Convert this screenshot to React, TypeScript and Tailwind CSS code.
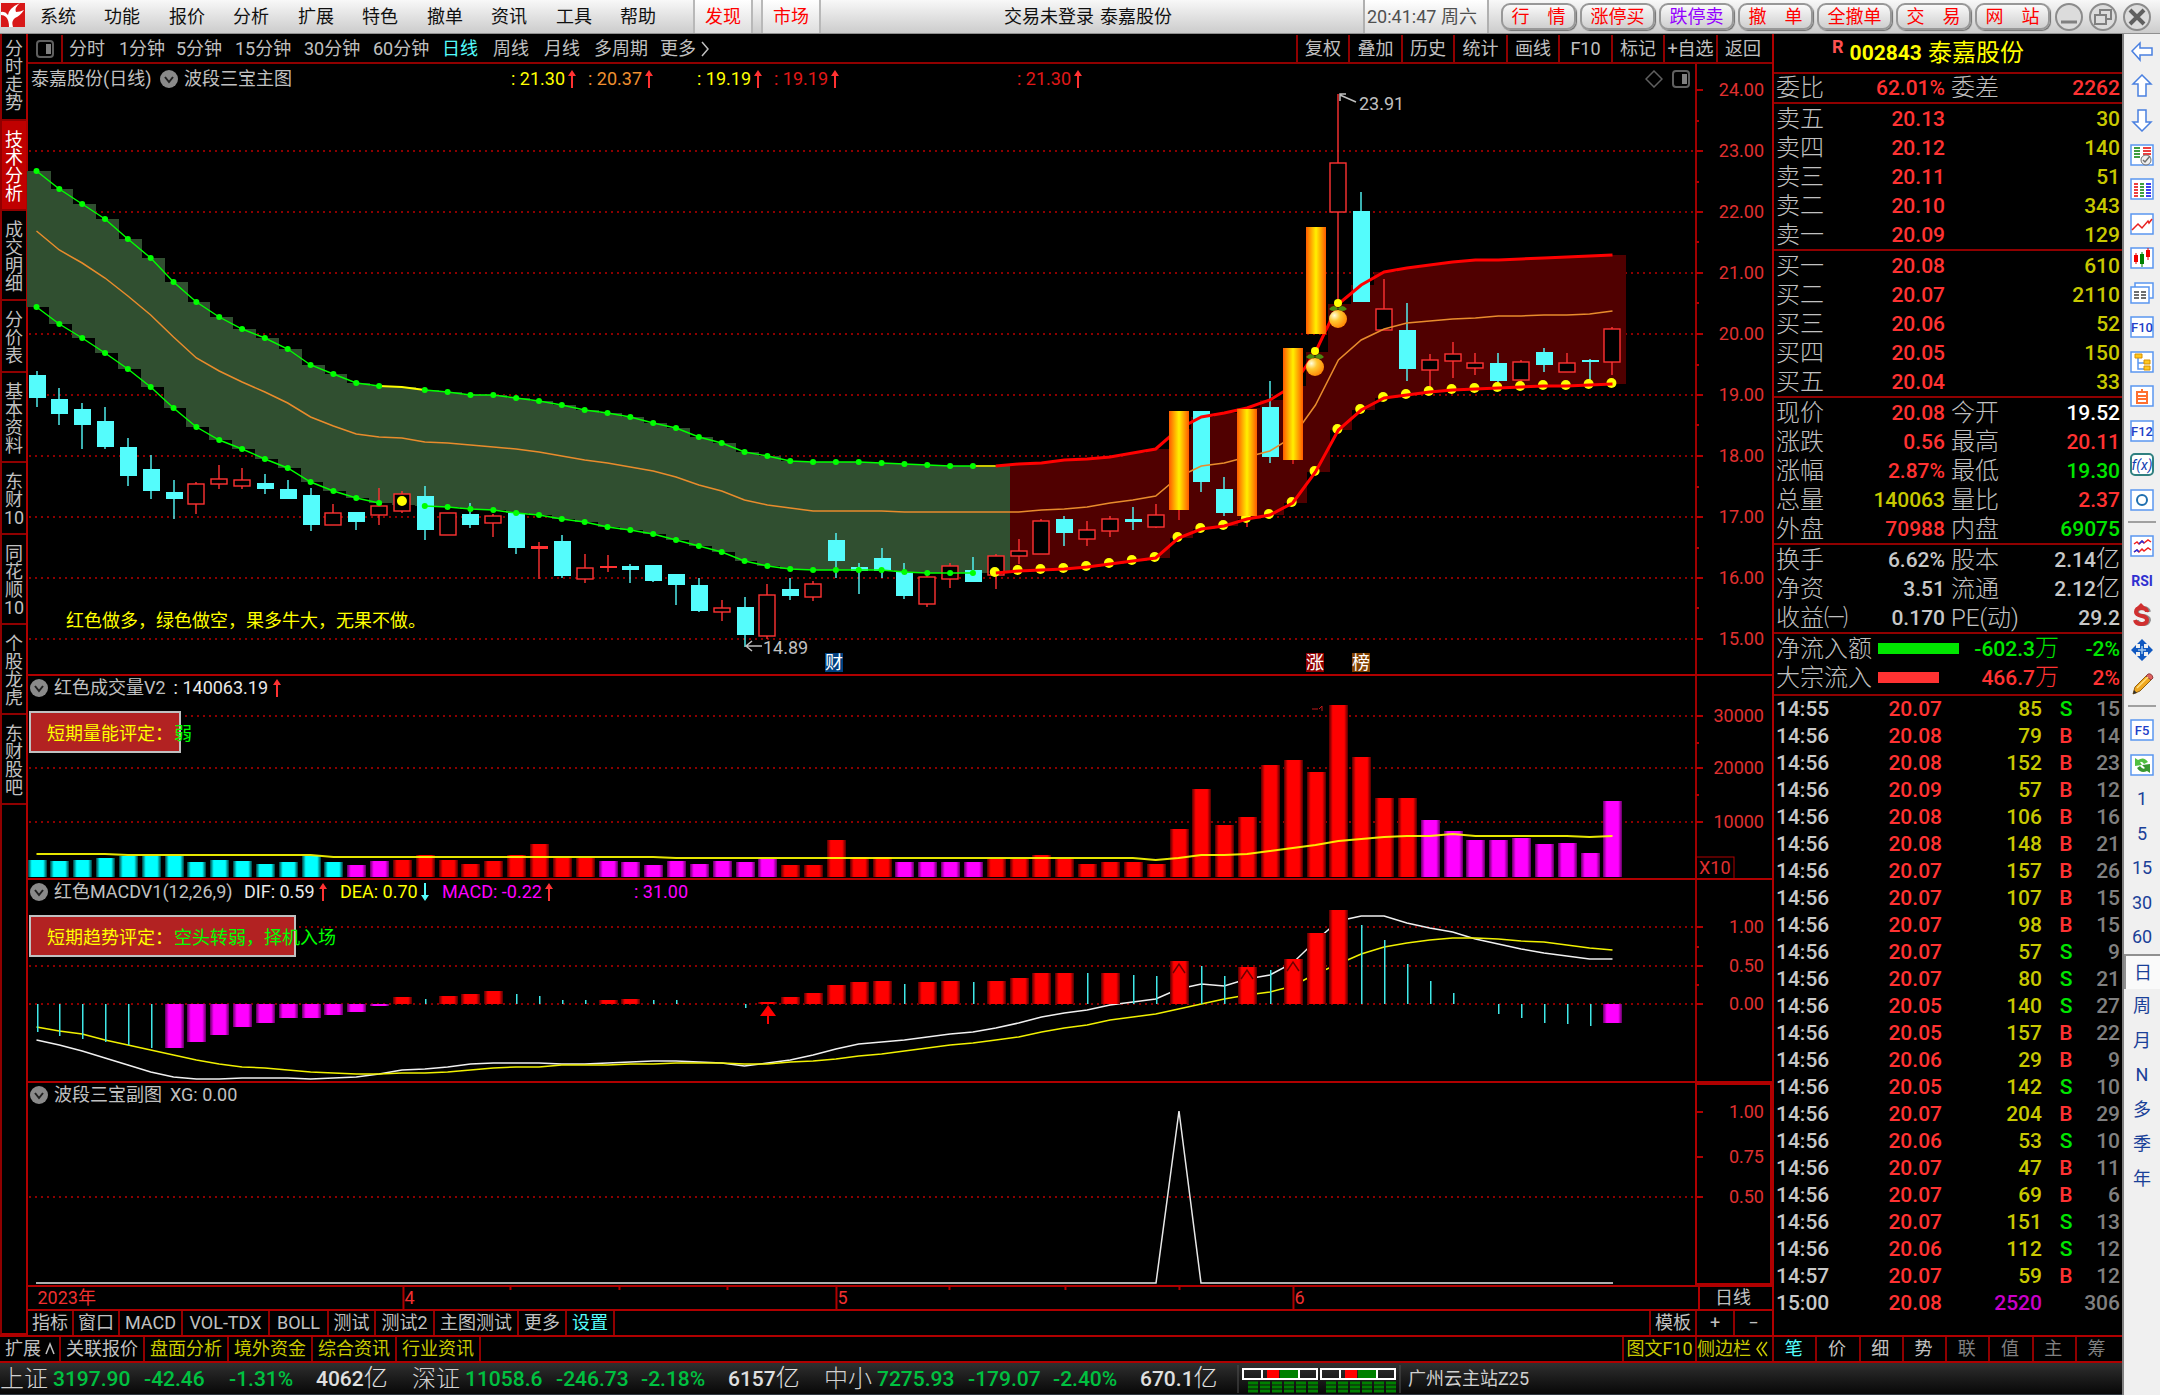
import React from "react";

type Kind = "down" | "up" | "flat" | "gold";
type Candle = [Kind, number, number, number, number];

const BAR_X0 = 36.5;
const BAR_STEP = 22.84;
const barX = (i: number) => BAR_X0 + BAR_STEP * i;

/* kind, wick top, body top, body bottom, wick bottom */
const candles: Candle[] = [
  ["down", 371, 375, 398, 407], ["down", 388, 399, 414, 425], ["down", 403, 409, 425, 449], ["down", 407, 421, 447, 449],
  ["down", 438, 447, 476, 486], ["down", 455, 469, 491, 499], ["down", 480, 492, 499, 519], ["up", 482, 484, 504, 514],
  ["up", 465, 479, 484, 489], ["up", 468, 480, 486, 489], ["down", 474, 483, 489, 494], ["down", 480, 489, 499, 499],
  ["down", 488, 495, 525, 531], ["up", 504, 513, 525, 525], ["down", 512, 512, 522, 530], ["up", 488, 506, 515, 525],
  ["up", 491, 494, 511, 513], ["down", 486, 496, 530, 540], ["up", 513, 513, 535, 535], ["down", 503, 514, 525, 528],
  ["up", 514, 516, 523, 537], ["down", 513, 513, 548, 554], ["flat", 542, 546, 549, 579], ["down", 535, 541, 576, 578],
  ["up", 554, 568, 579, 583], ["flat", 555, 566, 568, 572], ["down", 564, 566, 570, 583], ["down", 565, 565, 581, 582],
  ["down", 574, 574, 585, 605], ["down", 578, 585, 611, 612], ["up", 600, 608, 612, 621], ["down", 597, 607, 635, 647],
  ["up", 584, 595, 636, 639], ["down", 578, 589, 596, 600], ["up", 581, 584, 597, 601], ["down", 533, 540, 561, 578],
  ["down", 563, 567, 571, 594], ["down", 548, 558, 571, 578], ["down", 563, 572, 596, 599], ["up", 575, 577, 604, 607],
  ["up", 563, 566, 579, 588], ["down", 557, 570, 582, 582], ["up", 554, 556, 575, 589], ["up", 539, 551, 556, 564],
  ["up", 519, 521, 554, 554], ["down", 516, 519, 533, 546], ["up", 521, 530, 539, 546], ["up", 516, 519, 531, 537],
  ["down", 507, 519, 522, 530], ["up", 504, 515, 527, 528], ["gold", 411, 411, 510, 520], ["down", 411, 411, 482, 492],
  ["down", 477, 489, 513, 516], ["gold", 409, 409, 516, 527], ["down", 381, 407, 457, 463], ["gold", 348, 348, 460, 464],
  ["gold", 227, 227, 334, 334], ["up", 94, 163, 212, 300], ["down", 192, 211, 302, 302], ["up", 279, 309, 330, 330],
  ["down", 303, 330, 369, 381], ["up", 354, 360, 370, 387], ["up", 342, 354, 361, 378], ["up", 353, 363, 368, 375],
  ["down", 353, 363, 381, 383], ["up", 360, 362, 380, 382], ["down", 348, 352, 365, 372], ["up", 353, 363, 372, 372],
  ["down", 359, 360, 362, 380], ["up", 327, 329, 362, 375],
];

const upper = [
  171, 189, 204, 219, 239, 258, 282, 302, 317, 329, 338, 349, 365, 374, 383, 386, 387, 390, 392, 395, 395, 398, 401, 405,
  410, 413, 417, 423, 428, 437, 443, 452, 456, 461, 462, 462, 462, 463, 464, 465, 466, 466, 466, 464, 463, 460, 459, 457,
  453, 449, 429, 417, 413, 408, 400, 386, 352, 304, 285, 272, 268, 265, 262, 260, 260, 259, 258, 257, 256, 255,
];
const lower = [
  307, 324, 338, 353, 369, 387, 408, 427, 440, 449, 459, 468, 482, 491, 498, 503, 505, 506, 507, 509, 510, 513, 515, 519,
  522, 527, 530, 534, 540, 546, 552, 561, 566, 569, 570, 570, 570, 570, 572, 573, 573, 573, 573, 571, 570, 569, 567, 564,
  561, 558, 538, 529, 526, 519, 515, 503, 472, 430, 410, 398, 395, 392, 390, 389, 388, 387, 386, 386, 385, 384,
];
const middle = [
  231, 250, 263, 278, 296, 315, 337, 358, 371, 382, 392, 403, 417, 426, 434, 437, 438, 442, 443, 445, 447, 449, 452, 456,
  460, 463, 467, 471, 477, 485, 491, 500, 505, 508, 511, 511, 511, 511, 512, 512, 512, 512, 512, 512, 510, 509, 507, 503,
  500, 496, 477, 466, 463, 457, 451, 437, 405, 360, 340, 329, 323, 321, 319, 318, 316, 316, 315, 315, 314, 311,
];

const volumeTop = [
  859, 860, 859, 857, 855, 855, 855, 861, 859, 860, 863, 861, 855, 861, 864, 860, 859, 854, 859, 863, 860, 854, 843, 857,
  857, 860, 861, 864, 860, 863, 860, 861, 858, 864, 864, 839, 856, 856, 861, 861, 861, 861, 858, 858, 854, 858, 863, 861,
  861, 863, 828, 788, 824, 816, 764, 759, 771, 704, 756, 797, 797, 819, 830, 839, 839, 837, 843, 842, 852, 800,
];
const volumeColor = "ccccccccccccccmmrrrrrrrrrmmmmmmmmrrrrrmmmmrrrrrrrrrrrrrrrrrrrmmmmmmmmm";
const volumeMa = [
  853, 853, 853, 853, 854, 854, 854, 854, 854, 854, 854, 854, 854, 856, 856, 856, 856, 856, 856, 856, 856, 856, 856, 856,
  856, 856, 856, 856, 857, 857, 857, 857, 857, 857, 857, 857, 857, 857, 857, 857, 857, 857, 857, 857, 857, 857, 857, 857,
  857, 859, 857, 854, 854, 853, 850, 847, 844, 840, 838, 836, 835, 835, 833, 835, 835, 835, 835, 835, 836, 835,
];

const macdEnd = [
  1031, 1035, 1038, 1041, 1044, 1047, 1047, 1041, 1034, 1026, 1022, 1017, 1017, 1014, 1011, 1005, 996, 998, 995, 993, 990,
  993, 995, 999, 999, 999, 998, 999, 999, 1003, 1003, 1007, 1001, 996, 992, 984, 981, 980, 983, 981, 980, 981, 980, 977,
  972, 972, 972, 972, 974, 975, 960, 965, 975, 966, 969, 958, 932, 909, 924, 939, 963, 980, 992, 1003, 1013, 1017, 1022,
  1023, 1025, 1022,
];
const macdKind = "ttttttmmmmmmmmmmrtrrrttttrrttttt" + "rrrrrrtrrtrrrrtrttrttrtrrrttttttttttt" + "m";
const dif = [
  1039, 1044, 1050, 1057, 1064, 1071, 1076, 1078, 1078, 1077, 1077, 1077, 1078, 1077, 1076, 1073, 1069, 1068, 1066, 1063,
  1062, 1062, 1062, 1063, 1063, 1062, 1061, 1060, 1060, 1061, 1062, 1065, 1062, 1059, 1054, 1048, 1043, 1041, 1039, 1036,
  1033, 1031, 1027, 1022, 1016, 1012, 1009, 1004, 1001, 998, 988, 983, 985, 978, 974, 962, 940, 920, 915, 915, 922, 927,
  931, 938, 943, 948, 952, 955, 958, 958,
];
const dea = [
  1026, 1030, 1033, 1039, 1044, 1049, 1054, 1059, 1063, 1066, 1067, 1069, 1071, 1072, 1073, 1073, 1072, 1072, 1071, 1069,
  1067, 1066, 1066, 1064, 1064, 1064, 1063, 1063, 1062, 1062, 1062, 1063, 1063, 1061, 1060, 1058, 1055, 1053, 1050, 1047,
  1044, 1042, 1039, 1036, 1031, 1027, 1024, 1019, 1016, 1013, 1008, 1003, 998, 994, 991, 985, 973, 963, 953, 946, 942,
  939, 937, 937, 938, 940, 941, 944, 947, 949,
];

const points = (values: number[], from = 0, to = values.length - 1) =>
  values
    .slice(from, to + 1)
    .map((v, k) => `${barX(from + k).toFixed(1)},${v}`)
    .join(" ");

function GridLines({ ys }: { ys: number[] }) {
  return (
    <g stroke="#8c0000" strokeWidth="2" strokeDasharray="2 4">
      {ys.map((y) => (
        <line key={y} x1="29" x2="1695" y1={y} y2={y} />
      ))}
    </g>
  );
}

function Fruit({ x, y }: { x: number; y: number }) {
  return (
    <g>
      <circle cx={x} cy={y - 16} r="4" fill="#ffff00" />
      <path d={`M${x} ${y - 6} v-6`} stroke="#3a2a10" strokeWidth="3" />
      <path d={`M${x} ${y - 10} q-4 -6 -9 0 q4 4 9 0 q4 -6 9 0 q-4 4 -9 0`} fill="#4c8a10" />
      <circle cx={x} cy={y} r="9" fill="url(#fruit)" />
    </g>
  );
}

function Tag({ x, label, fill }: { x: number; label: string; fill: string }) {
  return (
    <g>
      <rect x={x} y="653" width="18" height="19" fill={fill} />
      <text x={x} y="669" fontSize="18" fill="#ffffff">{label}</text>
    </g>
  );
}

function PriceChart() {
  return (
    <svg viewBox="28 94 1667 580" className="block w-full grow overflow-visible" role="img" aria-label="日线">
      <defs>
        <linearGradient id="gold" x1="0" x2="1" y1="0" y2="0">
          <stop offset="0" stopColor="#ff5a00" />
          <stop offset="0.5" stopColor="#fff000" />
          <stop offset="1" stopColor="#ff5a00" />
        </linearGradient>
        <radialGradient id="fruit" cx="0.3" cy="0.3" r="0.8">
          <stop offset="0" stopColor="#ffffe0" />
          <stop offset="0.4" stopColor="#ffc830" />
          <stop offset="1" stopColor="#ff8000" />
        </radialGradient>
      </defs>
      <GridLines ys={[151, 212, 273, 334, 395, 456, 517, 578, 639]} />
      {upper.map((top, i) => (
        <rect
          key={i}
          x={Math.round(barX(i) - 10)}
          y={top}
          width={24}
          height={lower[i] - top}
          fill={i <= 42 ? "#304f30" : "#500000"}
          shapeRendering="crispEdges"
        />
      )).reverse()}
      {candles.map(([kind, high, top, bottom, low], i) => {
        const x = Math.round(barX(i));
        if (kind === "gold") {
          return <line key={i} x1={x} x2={x} y1={bottom} y2={low} stroke="#c01818" strokeWidth="2" />;
        }
        const color = kind === "down" ? "#54fcfc" : "#ff3232";
        return (
          <g key={i} strokeWidth="1.4">
            <line x1={x} x2={x} y1={high} y2={top} stroke={color} />
            <line x1={x} x2={x} y1={bottom} y2={low} stroke={color} />
            {kind === "up" ? (
              <rect x={x - 8} y={top} width="16" height={bottom - top} fill="#000000" stroke={color} />
            ) : (
              <rect x={x - 8} y={top} width="17" height={Math.max(2, bottom - top)} fill={color} />
            )}
          </g>
        );
      })}
      <circle cx={barX(16)} cy="501" r="5" fill="#ffff00" />
      <polyline points={points(middle)} fill="none" stroke="#e88c2c" strokeWidth="1.5" />
      <g fill="none" stroke="#00ff00" strokeWidth="1.4">
        <polyline points={points(upper, 0, 15)} />
        <polyline points={points(upper, 15, 17)} stroke="#ffff00" strokeWidth="2" />
        <polyline points={points(upper, 17, 41)} />
        <polyline points={points(upper, 41, 42)} stroke="#c8c800" strokeWidth="2" />
        <polyline points={points(lower, 0, 15)} />
        <polyline points={points(lower, 17, 41)} />
      </g>
      {upper.slice(0, 42).map((y, i) =>
        i === 16 ? null : (
          <g key={i} fill="#00ff00">
            <circle cx={barX(i)} cy={y} r="3" />
            <circle cx={barX(i)} cy={lower[i]} r="3" />
          </g>
        ),
      )}
      {lower.slice(42).map((y, k) => (
        <circle key={k} cx={barX(42 + k) - 1} cy={y - 1} r="5" fill="#ffff00" />
      ))}
      <polyline points={points(upper, 42)} fill="none" stroke="#ff0000" strokeWidth="3" />
      <polyline points={points(lower, 42)} fill="none" stroke="#ff0000" strokeWidth="3" />
      {candles.map(([kind, , top, bottom], i) =>
        kind === "gold" ? (
          <rect key={i} x={Math.round(barX(i)) - 10} y={top} width="20" height={bottom - top} fill="url(#gold)" />
        ) : null,
      )}
      <Fruit x={1315} y={367} />
      <Fruit x={1338} y={319} />
      <g fill="none" stroke="#c0c0c0" strokeWidth="1.5">
        <path d="M1356 102 l-16 -7 m0 6 v-7 h6" />
        <path d="M762 646 h-16 m6 -5 l-6 5 l6 5" />
      </g>
      <g fontSize="18" fill="#c0c0c0">
        <text x="1359" y="110">23.91</text>
        <text x="763" y="654">14.89</text>
      </g>
      <text x="66" y="627" fontSize="18" fill="#ffff00">红色做多，绿色做空，果多牛大，无果不做。</text>
      <Tag x={825} label="财" fill="#004080" />
      <Tag x={1306} label="涨" fill="#900000" />
      <Tag x={1352} label="榜" fill="#804000" />
    </svg>
  );
}

function BarGradients() {
  return (
    <defs>
      {[
        ["c", "#00ffff", "#003c3c"],
        ["m", "#ff00ff", "#600060"],
        ["r", "#ff0000", "#500000"],
      ].map(([id, mid, edge]) => (
        <linearGradient key={id} id={`bar-${id}`} x1="0" x2="1" y1="0" y2="0">
          <stop offset="0" stopColor={edge} />
          <stop offset="0.2" stopColor={mid} />
          <stop offset="0.8" stopColor={mid} />
          <stop offset="1" stopColor={edge} />
        </linearGradient>
      ))}
    </defs>
  );
}

function Verdict({ y, width, label, verdict }: { y: number; width: number; label: string; verdict: string }) {
  return (
    <g>
      <rect x="30" y={y} width={width} height="40" fill="#b22222" stroke="#c0c0c0" strokeWidth="2" />
      <text x="47" y={y + 28} fontSize="18" fill="#ffff00">{label}</text>
      <text x="174" y={y + 28} fontSize="18" fill="#00ff00">{verdict}</text>
    </g>
  );
}

function VolumeChart() {
  return (
    <svg viewBox="28 699 1667 178" className="block w-full grow" role="img" aria-label="成交量">
      <BarGradients />
      <GridLines ys={[715, 767, 821]} />
      <path d="M1312 708 h6 m4 -3 v5 m-3 -2 l3 -3" stroke="#c01818" fill="none" />
      {volumeTop.map((y, i) => (
        <rect key={i} x={Math.round(barX(i)) - 9} y={y} width="19" height={876 - y} fill={`url(#bar-${volumeColor[i]})`} />
      ))}
      <polyline points={points(volumeMa)} fill="none" stroke="#ffff00" strokeWidth="2" strokeOpacity="0.9" />
      <Verdict y={711} width={150} label="短期量能评定：" verdict="弱" />
    </svg>
  );
}

function MacdChart() {
  return (
    <svg viewBox="28 903 1667 177" className="block w-full grow" role="img" aria-label="MACD">
      <GridLines ys={[926, 965, 1003]} />
      <polyline points={points(dif)} fill="none" stroke="#f0f0f0" strokeWidth="1.5" />
      <polyline points={points(dea)} fill="none" stroke="#f0f000" strokeWidth="1.5" />
      {macdEnd.map((end, i) => {
        const kind = macdKind[i];
        const top = Math.min(1003, end);
        const height = Math.abs(end - 1003);
        const x = Math.round(barX(i));
        return kind === "t" ? (
          <rect key={i} x={x} y={top} width="1.5" height={height} fill="#40e8e8" />
        ) : (
          <rect key={i} x={x - 9} y={top} width="19" height={height} fill={`url(#bar-${kind})`} />
        );
      })}
      <path d="M768 1004 l8 11 h-7 v8 h-2 v-8 h-7 z" fill="#ff0000" />
      {[50, 53, 55].map((i) => (
        <path
          key={i}
          d={`M${Math.round(barX(i)) - 6} ${macdEnd[i] + 12} l6 -9 l6 9`}
          fill="#ff0000"
          stroke="#700000"
          strokeWidth="1.5"
        />
      ))}
      <Verdict y={915} width={265} label="短期趋势评定：" verdict="空头转弱，择机入场" />
    </svg>
  );
}

function SignalChart() {
  return (
    <svg viewBox="28 1106 1667 178" className="block w-full grow" role="img" aria-label="波段三宝副图">
      <GridLines ys={[1196]} />
      <path
        d={`M36 1282 H${barX(49).toFixed(0)} L${barX(50).toFixed(0)} 1110 L${barX(51).toFixed(0)} 1282 H1613`}
        fill="none"
        stroke="#e8e8e8"
        strokeWidth="1.5"
      />
    </svg>
  );
}

function Axis({ top, height, labels, minor, boxed = false, unit }: {
  top: number;
  height: number;
  labels: [number, string][];
  minor: number[];
  boxed?: boolean;
  unit?: string;
}) {
  return (
    <svg
      viewBox={`0 ${top} 77 ${height}`}
      className="block w-[77px] shrink-0 self-stretch"
      role="img"
      aria-label="坐标"
    >
      {boxed ? (
        <rect x="1" y={top + 1} width="75" height={height - 2} fill="none" stroke="#b00000" strokeWidth="2" />
      ) : (
        <line x1="1" x2="1" y1={top} y2={top + height} stroke="#a00000" strokeWidth="2" />
      )}
      <g stroke="#b00000" strokeWidth="2">
        {labels.map(([y]) => (
          <line key={y} x1="1" x2="8" y1={y} y2={y} />
        ))}
        {minor.map((y) => (
          <line key={y} x1="1" x2="4" y1={y} y2={y} />
        ))}
      </g>
      <g fontSize="18" fill="#e03030" textAnchor="end">
        {labels.map(([y, label]) => (
          <text key={y} x="69" y={y + 6}>{label}</text>
        ))}
      </g>
      {unit && (
        <g>
          <rect x="1" y={top + height - 21} width="38" height="22" fill="none" stroke="#b00000" />
          <text x="4" y={top + height - 4} fontSize="18" fill="#e03030">{unit}</text>
        </g>
      )}
    </svg>
  );
}

function Arrow({ down = false }: { down?: boolean }) {
  return (
    <svg viewBox="0 0 10 20" className="h-5 w-2.5 shrink-0" aria-hidden="true">
      {down ? (
        <path d="M4 1 h2 v12 h3 l-4 6 l-4 -6 h3 z" fill="#54fcfc" />
      ) : (
        <path d="M4 19 h2 v-12 h3 l-4 -6 l-4 6 h3 z" fill="#ff3232" />
      )}
    </svg>
  );
}

function Toggle() {
  return (
    <button type="button" aria-label="指标菜单" className="flex h-[18px] w-[18px] shrink-0 items-center justify-center rounded-full bg-[#8a8a8a]">
      <svg viewBox="0 0 12 12" className="h-3 w-3" aria-hidden="true">
        <path d="M2 4 l4 5 l4 -5" fill="none" stroke="#202020" strokeWidth="2" />
      </svg>
    </button>
  );
}

function LegendValue({ value, className }: { value: string; className: string }) {
  return (
    <span className={`flex w-[69px] shrink-0 items-center gap-0.5 ${className}`}>
      <span className="w-[54px] whitespace-pre">: {value}</span>
      <Arrow />
    </span>
  );
}

function PanelIcon() {
  return (
    <svg viewBox="0 0 20 20" className="h-5 w-5" aria-hidden="true">
      <rect x="2" y="2" width="16" height="16" rx="3" fill="none" stroke="#606060" strokeWidth="2" />
      <rect x="11" y="5" width="5" height="10" fill="#808080" />
    </svg>
  );
}

const menus = ["系统", "功能", "报价", "分析", "扩展", "特色", "撤单", "资讯", "工具", "帮助"];
const tradeButtons = ["行　情", "涨停买", "跌停卖", "撤　单", "全撤单", "交　易", "网　站"];

function TopBar() {
  return (
    <header className="flex h-[34px] shrink-0 items-stretch border-b border-[#909090] bg-linear-to-b from-[#f8f8f8] to-[#cccccc] text-[18px] leading-[24px] text-[#101010]">
      <svg viewBox="0 0 26 26" className="my-0.5 h-[26px] w-[26px] shrink-0" role="img" aria-label="通达信">
        <rect x="1" y="1" width="24" height="24" fill="#d81818" />
        <path d="M1 10 Q5 9 8 13 Q9 6 20 1 Q14 6 16 10 Q20 10 24 8 Q20 14 15 16 Q11 19 13 25 H9 Q9 18 6 15 Q4 13 1 13 Z" fill="#ffffff" />
      </svg>
      <nav className="flex">
        {menus.map((m, i) => (
          <button key={m} type="button" className={i % 2 ? "w-[65px] pl-3.5 text-left" : "w-[64px] pl-3.5 text-left"}>
            {m}
          </button>
        ))}
      </nav>
      <div className="ml-[22px] flex gap-2">
        {["发现", "市场"].map((m) => (
          <button key={m} type="button" className="w-[60px] border-x-2 border-[#b8b8b8] bg-linear-to-b from-white to-[#dedede] text-center text-[#ff0000]">
            {m}
          </button>
        ))}
      </div>
      <h1 className="flex grow items-center justify-center gap-1.5 pr-2">
        <span>交易未登录</span>
        <span>泰嘉股份</span>
      </h1>
      <div className="flex w-[126px] items-center border-x-2 border-[#b0b0b0] bg-linear-to-b from-white to-[#dadada] pl-0.5 text-[#505050]">
        <time>20:41:47 周六</time>
      </div>
      <div className="ml-3 flex items-center gap-1">
        {tradeButtons.map((b) => (
          <button
            key={b}
            type="button"
            className={
              "h-[27px] w-[75px] rounded-[9px] border-2 border-[#989898] bg-linear-to-b from-[#fafafa] to-[#cfcfcf] text-center leading-[22px] whitespace-nowrap shadow-[1px_1px_1px_#707070] " +
              (b === "跌停卖" ? "text-[#9400ff]" : "text-[#ff0000]")
            }
          >
            {b}
          </button>
        ))}
      </div>
      <div className="mr-2 ml-1 flex items-center gap-1">
        {["最小化", "还原", "关闭"].map((label, i) => (
          <button key={label} type="button" aria-label={label} className="h-[30px] w-[30px]">
            <svg viewBox="0 0 30 30" className="h-[30px] w-[30px]" aria-hidden="true">
              <circle cx="15" cy="15" r="13" fill="#dcdcdc" stroke="#8c8c8c" strokeWidth="2" />
              {i === 0 && <path d="M7 20 h16" stroke="#808080" strokeWidth="3" />}
              {i === 1 && (
                <g fill="none" stroke="#808080" strokeWidth="2">
                  <path d="M12 12 V8 H23 V17 H19" />
                  <path d="M7 13 h11 v9 h-11 z" />
                </g>
              )}
              {i === 2 && <path d="M8 8 L22 22 M22 8 L8 22" stroke="#606060" strokeWidth="4" />}
            </svg>
          </button>
        ))}
      </div>
    </header>
  );
}

const sideTabs = ["分时走势", "技术分析", "成交明细", "分价表", "基本资料", "东财10", "同花顺10", "个股龙虎", "东财股吧"];

function SideTabs() {
  return (
    <nav className="flex w-[28px] shrink-0 flex-col border-r-2 border-b-2 border-l-2 border-r-[#b00000] border-b-[#b00000] border-l-[#900000] text-[18px] leading-[18px]">
      {sideTabs.map((t, i) => (
        <button
          key={t}
          type="button"
          className={
            "flex justify-center border-b-2 border-[#900000] " +
            (i === 0 ? "h-[87px] pt-1.5 text-[#c0c0c0]" : i === 1 ? "bg-[#c00000] pt-2.5 pb-1.5 text-white" : "pt-2.5 pb-1.5 text-[#c0c0c0]")
          }
        >
          <span className="w-[22px] text-center break-all">{t}</span>
        </button>
      ))}
    </nav>
  );
}

const periods: [string, string][] = [
  ["分时", "w-[50px]"], ["1分钟", "w-[57px]"], ["5分钟", "w-[59px]"], ["15分钟", "w-[69px]"], ["30分钟", "w-[69px]"],
  ["60分钟", "w-[69px]"], ["日线", "w-[51px]"], ["周线", "w-[51px]"], ["月线", "w-[50px]"], ["多周期", "w-[66px]"],
];
const chartTools = ["复权", "叠加", "历史", "统计", "画线", "F10", "标记", "+自选", "返回"];

function PeriodBar() {
  return (
    <div className="flex h-[30px] shrink-0 items-stretch border-b-2 border-[#900000] pt-px text-[18px] leading-[24px] text-[#c0c0c0]">
      <button type="button" aria-label="面板" className="mr-1.5 flex w-[35px] items-center justify-center border-r-2 border-[#900000]">
        <PanelIcon />
      </button>
      {periods.map(([p, w]) => (
        <button key={p} type="button" className={`text-left ${w} ${p === "日线" ? "text-[#54fcfc]" : ""}`}>
          {p}
        </button>
      ))}
      <button type="button" className="flex items-center gap-1">
        <span>更多</span>
        <svg viewBox="0 0 10 16" className="h-4 w-2.5" aria-hidden="true">
          <path d="M2 1 l6 7 l-6 7" fill="none" stroke="#c0c0c0" strokeWidth="1.5" />
        </svg>
      </button>
      <div className="ml-auto flex">
        {chartTools.map((t) => (
          <button key={t} type="button" className="w-[52px] border-l-2 border-[#900000] text-center whitespace-nowrap last:w-[56px] last:pr-1 even:w-[53px]">
            {t}
          </button>
        ))}
      </div>
    </div>
  );
}

const indicatorTabs: [string, string][] = [
  ["指标", "w-[46px]"], ["窗口", "w-[46px]"], ["MACD", "w-[63px]"], ["VOL-TDX", "w-[87px]"], ["BOLL", "w-[59px]"],
  ["测试", "w-[47px]"], ["测试2", "w-[59px]"], ["主图测试", "w-[84px]"], ["更多", "w-[48px]"], ["设置", "w-[48px]"],
];

function Charts() {
  return (
    <main className="flex min-w-0 grow flex-col text-[18px] leading-[24px] text-[#c0c0c0]">
      <PeriodBar />
      <section className="flex h-[610px] shrink-0">
        <div className="flex min-w-0 grow flex-col">
          <div className="flex h-[30px] shrink-0 items-center pl-[3px]">
            <span className="w-[129px]">泰嘉股份(日线)</span>
            <Toggle />
            <span className="ml-1.5 w-[327px]">波段三宝主图</span>
            <LegendValue value="21.30" className="text-[#ffff00]" />
            <LegendValue value="20.37" className="ml-2 text-[#f09030]" />
            <LegendValue value="19.19" className="ml-10 text-[#ffff00]" />
            <LegendValue value="19.19" className="ml-2 text-[#e01818]" />
            <LegendValue value="21.30" className="ml-[174px] text-[#e01818]" />
            <div className="mr-1 ml-auto flex items-center gap-2">
              <svg viewBox="0 0 18 18" className="h-[18px] w-[18px]" aria-hidden="true">
                <path d="M9 1 L17 9 L9 17 L1 9 Z" fill="none" stroke="#606060" strokeWidth="1.5" />
              </svg>
              <PanelIcon />
            </div>
          </div>
          <PriceChart />
        </div>
        <Axis
          top={64}
          height={610}
          labels={[[90, "24.00"], [151, "23.00"], [212, "22.00"], [273, "21.00"], [334, "20.00"], [395, "19.00"], [456, "18.00"], [517, "17.00"], [578, "16.00"], [639, "15.00"]]}
          minor={[121, 182, 242, 303, 365, 425, 487, 548, 608]}
        />
      </section>
      <section className="flex h-[204px] shrink-0 border-t-2 border-[#b00000]">
        <div className="flex min-w-0 grow flex-col">
          <div className="flex h-[24px] shrink-0 items-center pl-0.5">
            <Toggle />
            <span className="ml-1.5">红色成交量V2</span>
            <span className="mr-1 ml-2 text-[#e8e8e8]">: 140063.19</span>
            <Arrow />
          </div>
          <VolumeChart />
        </div>
        <Axis top={675} height={202} labels={[[715, "30000"], [767, "20000"], [821, "10000"]]} minor={[742, 794]} unit="X10" />
      </section>
      <section className="flex h-[203px] shrink-0 border-t-2 border-[#b00000]">
        <div className="flex min-w-0 grow flex-col">
          <div className="flex h-[24px] shrink-0 items-center pl-0.5">
            <Toggle />
            <span className="ml-1.5 w-[190px]">红色MACDV1(12,26,9)</span>
            <span className="w-[74px] text-[#e8e8e8]">DIF: 0.59</span>
            <Arrow />
            <span className="ml-3 w-[80px] text-[#ffff00]">DEA: 0.70</span>
            <Arrow down />
            <span className="ml-3 w-[102px] text-[#ff00ff]">MACD: -0.22</span>
            <Arrow />
            <span className="ml-20 text-[#ff00ff]">: 31.00</span>
          </div>
          <MacdChart />
        </div>
        <Axis top={879} height={201} labels={[[926, "1.00"], [965, "0.50"], [1003, "0.00"]]} minor={[946, 984]} />
      </section>
      <section className="flex h-[204px] shrink-0 border-t-2 border-[#b00000]">
        <div className="flex min-w-0 grow flex-col">
          <div className="flex h-[24px] shrink-0 items-center pl-0.5">
            <Toggle />
            <span className="ml-1.5">波段三宝副图</span>
            <span className="ml-2">XG: 0.00</span>
          </div>
          <SignalChart />
        </div>
        <Axis boxed top={1082} height={202} labels={[[1111, "1.00"], [1156, "0.75"], [1196, "0.50"]]} minor={[]} />
      </section>
      <div className="flex h-[24px] shrink-0 border-t-2 border-[#b00000]">
        <svg viewBox="28 1286 1667 22" className="block min-w-0 grow" role="img" aria-label="日期">
          <g stroke="#b00000" strokeWidth="2">
            {[402, 835, 1292].map((x) => (
              <line key={x} x1={x} x2={x} y1="1286" y2="1309" />
            ))}
            {[509, 618, 726, 948, 1064, 1178].map((x) => (
              <line key={x} x1={x} x2={x} y1="1286" y2="1289" />
            ))}
          </g>
          <g fontSize="18" fill="#f03030">
            <text x="36" y="1303">2023年</text>
            <text x="403" y="1303">4</text>
            <text x="836" y="1303">5</text>
            <text x="1293" y="1303">6</text>
          </g>
        </svg>
        <span className="w-[77px] border-l-2 border-[#b00000] pr-1.5 text-center leading-[22px]">日线</span>
      </div>
      <div className="flex h-[26px] shrink-0 border-t-2 border-[#b00000]">
        {indicatorTabs.map(([t, w]) => (
          <button key={t} type="button" className={`border-r-2 border-[#900000] text-center whitespace-nowrap ${w} ${t === "设置" ? "text-[#54fcfc]" : ""}`}>
            {t}
          </button>
        ))}
        <div className="ml-auto flex">
          <button type="button" className="w-[46px] border-l-2 border-[#900000]">模板</button>
          <button type="button" className="w-[38px] border-l-2 border-[#900000]">+</button>
          <button type="button" className="w-[39px] border-l-2 border-[#900000]">−</button>
        </div>
      </div>
    </main>
  );
}

type Cell = [label: string, value: string, color: string];

function Amount({ value }: { value: string }) {
  const unit = /[亿万]$/.test(value) ? value.slice(-1) : "";
  return (
    <>
      {unit ? value.slice(0, -1) : value}
      {unit && <span className="text-[24px] font-light">{unit}</span>}
    </>
  );
}

const RED = "text-[#ff3232]";
const YELLOW = "text-[#c8c800]";
const GREEN = "text-[#00e600]";
const WHITE = "text-white";
const GRAY = "text-[#c8c8c8]";

const sells: [string, string, string][] = [["卖五", "20.13", "30"], ["卖四", "20.12", "140"], ["卖三", "20.11", "51"], ["卖二", "20.10", "343"], ["卖一", "20.09", "129"]];
const buys: [string, string, string][] = [["买一", "20.08", "610"], ["买二", "20.07", "2110"], ["买三", "20.06", "52"], ["买四", "20.05", "150"], ["买五", "20.04", "33"]];

function Book({ rows, name }: { rows: [string, string, string][]; name: string }) {
  return (
    <div className="border-t-2 border-[#900000]">
      <table aria-label={name} className="w-full table-fixed">
        <tbody>
          {rows.map(([label, price, size]) => (
            <tr key={label} className="h-[29px]">
              <th scope="row" className="w-[80px] pl-0.5 text-left text-[24px] font-light text-[#c0c0c0]">{label}</th>
              <td className={`w-[91px] text-right ${RED}`}>{price}</td>
              <td className={`pr-0.5 text-right ${YELLOW}`}>{size}</td>
            </tr>
          ))}
        </tbody>
      </table>
    </div>
  );
}

const quote: [Cell, Cell][] = [
  [["现价", "20.08", RED], ["今开", "19.52", WHITE]],
  [["涨跌", "0.56", RED], ["最高", "20.11", RED]],
  [["涨幅", "2.87%", RED], ["最低", "19.30", GREEN]],
  [["总量", "140063", YELLOW], ["量比", "2.37", RED]],
  [["外盘", "70988", RED], ["内盘", "69075", GREEN]],
];
const basics: [Cell, Cell][] = [
  [["换手", "6.62%", GRAY], ["股本", "2.14亿", GRAY]],
  [["净资", "3.51", GRAY], ["流通", "2.12亿", GRAY]],
  [["收益㈠", "0.170", GRAY], ["PE(动)", "29.2", GRAY]],
];

function Pairs({ rows, name }: { rows: [Cell, Cell][]; name: string }) {
  return (
    <div className="border-t-2 border-[#900000]">
      <table aria-label={name} className="w-full table-fixed">
        <tbody>
          {rows.map(([a, b]) => (
            <tr key={a[0]} className="h-[29px]">
              <th scope="row" className="w-[83px] pl-0.5 text-left text-[24px] font-light whitespace-nowrap text-[#c0c0c0]">{a[0]}</th>
              <td className={`w-[88px] text-right ${a[2]}`}>{a[1]}</td>
              <th scope="row" className="w-[84px] pl-1.5 text-left text-[24px] font-light whitespace-nowrap text-[#c0c0c0]">{b[0]}</th>
              <td className={`pr-0.5 text-right ${b[2]}`}><Amount value={b[1]} /></td>
            </tr>
          ))}
        </tbody>
      </table>
    </div>
  );
}

const ticks: [string, string, string, string, string][] = [
  ["14:55", "20.07", "85", "S", "15"], ["14:56", "20.08", "79", "B", "14"], ["14:56", "20.08", "152", "B", "23"],
  ["14:56", "20.09", "57", "B", "12"], ["14:56", "20.08", "106", "B", "16"], ["14:56", "20.08", "148", "B", "21"],
  ["14:56", "20.07", "157", "B", "26"], ["14:56", "20.07", "107", "B", "15"], ["14:56", "20.07", "98", "B", "15"],
  ["14:56", "20.07", "57", "S", "9"], ["14:56", "20.07", "80", "S", "21"], ["14:56", "20.05", "140", "S", "27"],
  ["14:56", "20.05", "157", "B", "22"], ["14:56", "20.06", "29", "B", "9"], ["14:56", "20.05", "142", "S", "10"],
  ["14:56", "20.07", "204", "B", "29"], ["14:56", "20.06", "53", "S", "10"], ["14:56", "20.07", "47", "B", "11"],
  ["14:56", "20.07", "69", "B", "6"], ["14:56", "20.07", "151", "S", "13"], ["14:56", "20.06", "112", "S", "12"],
  ["14:57", "20.07", "59", "B", "12"], ["15:00", "20.08", "2520", "", "306"],
];

function QuotePanel() {
  return (
    <aside className="flex w-[350px] shrink-0 flex-col border-l-2 border-[#b00000] text-[21px] leading-[28px] font-medium">
      <h2 className="flex h-[38px] items-center justify-center gap-1.5 pr-10 text-[#ffff00]">
        <span className="-mt-3 text-[18px] font-bold text-[#ff5050]">R</span>
        <span className="font-bold">002843</span>
        <span className="text-[24px] font-normal">泰嘉股份</span>
      </h2>
      <div className="flex h-[30px] items-center border-t-2 border-[#900000] pr-0.5 pl-0.5">
        <span className="text-[24px] font-light text-[#c0c0c0]">委比</span>
        <span className={`w-[121px] text-right ${RED}`}>62.01%</span>
        <span className="ml-1.5 text-[24px] font-light text-[#c0c0c0]">委差</span>
        <span className={`ml-auto ${RED}`}>2262</span>
      </div>
      <Book rows={sells} name="卖盘" />
      <Book rows={buys} name="买盘" />
      <Pairs rows={quote} name="行情" />
      <Pairs rows={basics} name="基本面" />
      <div className="border-t-2 border-[#900000] pb-0.5">
        {[
          { label: "净流入额", bar: "h-[11px] w-[81px] bg-[#00e600]", value: "-602.3万", pct: "-2%", color: GREEN },
          { label: "大宗流入", bar: "h-[11px] w-[61px] bg-[#ff3232]", value: "466.7万", pct: "2%", color: RED },
        ].map((f) => (
          <div key={f.label} className="flex h-[29px] items-center pr-0.5 pl-0.5">
            <span className="w-[102px] text-[24px] font-light whitespace-nowrap text-[#c0c0c0]">{f.label}</span>
            <span className="w-[81px]"><span className={`block ${f.bar}`} /></span>
            <span className={`w-[100px] text-right whitespace-nowrap ${f.color}`}><Amount value={f.value} /></span>
            <span className={`ml-auto ${f.color}`}>{f.pct}</span>
          </div>
        ))}
      </div>
      <div className="grow border-t-2 border-[#900000]">
        <table aria-label="分笔成交" className="w-full table-fixed text-[21px] leading-[27px]">
          <tbody>
            {ticks.map(([time, price, size, side, count], i) => (
              <tr key={i} className="h-[27px]">
                <td className={`w-[78px] pl-0.5 ${GRAY}`}>{time}</td>
                <td className={`w-[90px] text-right ${RED}`}>{price}</td>
                <td className={`w-[100px] text-right ${side ? YELLOW : "text-[#c800c8]"}`}>{size}</td>
                <td className={`w-[36px] pl-3 text-center ${side === "S" ? GREEN : RED}`}>{side}</td>
                <td className="pr-0.5 text-right text-[#808080]">{count}</td>
              </tr>
            ))}
          </tbody>
        </table>
      </div>
    </aside>
  );
}

function Boxed({ children }: { children: React.ReactNode }) {
  return (
    <>
      <rect x="1" y="2" width="22" height="20" fill="#ffffff" stroke="#5a96f0" strokeWidth="1.5" />
      {children}
    </>
  );
}

function Dashes({ x, ys, color, w = 5 }: { x: number; ys: number[]; color: string; w?: number }) {
  return <path d={ys.map((y) => `M${x} ${y} h${w}`).join(" ")} stroke={color} strokeWidth="1.5" />;
}

function Glyph({ text }: { text: string }) {
  return (
    <text x="12" y="17" fontSize="13" fontWeight="500" textAnchor="middle" fill="#2040c8">{text}</text>
  );
}

const navIcons: [string, React.ReactNode][] = [
  ["后退", <path d="M2 12 L10 4 V9 H22 V16 H10 V21 Z" fill="#fff" stroke="#4a80e0" strokeWidth="1.5" />],
  ["上翻", <path d="M12 1 L21 10 H16 V22 H8 V10 H3 Z" fill="#fff" stroke="#4a80e0" strokeWidth="1.5" />],
  ["下翻", <path d="M12 23 L21 14 H16 V2 H8 V14 H3 Z" fill="#fff" stroke="#4a80e0" strokeWidth="1.5" />],
  ["自选报价", <Boxed>
    <Dashes x={4} w={6} ys={[5, 8, 11, 14]} color="#008000" />
    <Dashes x={13} w={8} ys={[5, 8, 11]} color="#e80000" />
    <circle cx="16" cy="17" r="5" fill="#f0f0f0" stroke="#707070" /><path d="M13 17 l2 2 l5 -6" fill="none" stroke="#707070" strokeWidth="1.5" />
  </Boxed>],
  ["报价列表", <Boxed>
    <Dashes x={4} w={4} ys={[7, 10, 13, 16, 19]} color="#e80000" />
    <Dashes x={10} w={4} ys={[7, 10, 13, 16, 19]} color="#008000" />
    <Dashes x={16} w={5} ys={[7, 10, 13, 16, 19]} color="#0000e8" />
  </Boxed>],
  ["分时图", <Boxed><path d="M2 18 L8 12 L10 14 L12 16 L18 9 L19 11 L22 7" fill="none" stroke="#e82020" strokeWidth="1.5" /></Boxed>],
  ["K线图", <Boxed>
    <path d="M6 7 v11 M18 2 v12" stroke="#e80000" /><path d="M12 6 v15" stroke="#008000" />
    <path d="M4 9 h4 v7 h-4 z M16 4 h4 v7 h-4 z" fill="#f00000" /><path d="M10 8 h4 v10 h-4 z" fill="#008000" />
  </Boxed>],
  ["多窗口", <>
    <rect x="5" y="2" width="18" height="15" fill="#fff" stroke="#5a96f0" strokeWidth="1.5" />
    <rect x="1" y="6" width="18" height="16" fill="#fff" stroke="#5a96f0" strokeWidth="1.5" />
    <Dashes x={4} w={5} ys={[11, 14, 17]} color="#404040" /><Dashes x={11} w={5} ys={[11, 14, 17]} color="#404040" />
  </>],
  ["F10资料", <Boxed><Glyph text="F10" /></Boxed>],
  ["树形", <Boxed>
    <path d="M8 8 V19 H14 M8 13 H14" fill="none" stroke="#5a96f0" strokeWidth="1.5" />
    <path d="M5 4 h7 v4 h-7 z M14 10 h6 v4 h-6 z M14 16 h6 v4 h-6 z" fill="#ffc820" stroke="#d89000" />
  </Boxed>],
  ["自选股", <Boxed><path d="M7 8 h10 v11 h-10 z M12 5 v3 M7 12 h10 M7 15 h10" fill="none" stroke="#ff7030" strokeWidth="2" /></Boxed>],
  ["F12", <Boxed><Glyph text="F12" /></Boxed>],
  ["公式", <>
    <rect x="1" y="1" width="22" height="21" rx="4" fill="#fff" stroke="#308080" strokeWidth="2" />
    <text x="12" y="17" fontSize="14" fontStyle="italic" textAnchor="middle" fill="#1040b0">f(x)</text>
  </>],
  ["圆", <Boxed><circle cx="12" cy="12" r="5" fill="none" stroke="#2070b0" strokeWidth="2" /></Boxed>],
];
const toolIcons: [string, React.ReactNode][] = [
  ["叠加走势", <Boxed>
    <path d="M4 10 l3 -2 l2 2 l3 -3 l2 2 l4 -3 l3 2" fill="none" stroke="#f02020" strokeWidth="1.5" />
    <path d="M4 18 l3 -2 l2 2 l3 -3 l2 2 l4 -3 l3 2" fill="none" stroke="#f02020" strokeWidth="1.5" />
    <path d="M9 10 l3 -3 l2 2 M4 18 l3 -2 l2 2" fill="none" stroke="#2030e0" strokeWidth="1.5" />
  </Boxed>],
  ["RSI", <text x="12" y="17" fontSize="14" fontWeight="700" textAnchor="middle" fill="#3030d0">RSI</text>],
  ["资金", <>
    <path d="M19 9 Q18 5 13 5 Q7 5 7 9 Q7 12 13 13 Q19 14 19 17 Q18 21 13 21 Q7 21 7 17" fill="none" stroke="#909090" strokeWidth="4" />
    <path d="M17 9 Q17 5 11 5 Q6 5 6 9 Q6 12 12 13 Q17 14 17 17 Q17 21 11 21 Q6 21 5 17" fill="none" stroke="#d03030" strokeWidth="4" />
    <path d="M6 5 L11 0 L16 5 Z" fill="#d03030" />
  </>],
  ["移动", <>
    <path d="M12 1 l5 5 h-10 z M12 23 l5 -5 h-10 z M1 12 l5 -5 v10 z M23 12 l-5 -5 v10 z" fill="#1058c0" />
    <path d="M12 5 V19 M5 12 H19" stroke="#1058c0" strokeWidth="4" />
    <path d="M12 8 V16 M8 12 H16" stroke="#a0c8f0" strokeWidth="1.5" />
  </>],
  ["画线", <>
    <path d="M3 22 L5 15 L17 3 L22 7 L10 19 Z" fill="#f0a820" stroke="#906010" />
    <path d="M16 4 L18 2 Q22 1 23 6 L21 8 Z" fill="#e06060" stroke="#904040" />
    <path d="M3 22 L4 18 L7 21 Z" fill="#303030" />
    <path d="M7 16 L18 5" stroke="#ffe080" strokeWidth="1.5" />
  </>],
];
const cycleIcons: [string, React.ReactNode][] = [
  ["F5", <Boxed><Glyph text="F5" /></Boxed>],
  ["刷新", <Boxed>
    <path d="M5 13 V5 L8 7 Q14 3 18 9 L14 11 Q12 8 10 9 L12 12 Z" fill="#50c040" />
    <path d="M20 11 V20 L17 18 Q11 21 7 15 L10 13 Q13 17 15 15 L12 12 Z" fill="#389830" />
  </Boxed>],
];
const cycles = ["1", "5", "15", "30", "60", "日", "周", "月", "N", "多", "季", "年"];

function IconButton({ label, children }: { label: string; children: React.ReactNode }) {
  return (
    <button type="button" aria-label={label} className="flex items-center justify-center odd:h-[34px] even:h-[35px]">
      <svg viewBox="0 0 24 24" className="h-6 w-6" aria-hidden="true">{children}</svg>
    </button>
  );
}

function ToolRail() {
  return (
    <nav className="flex w-[38px] shrink-0 flex-col border-l-2 border-[#808080] bg-[#f0f0f0] text-[18px] leading-[24px] text-[#1a4098]">
      <div className="flex flex-col">
        {navIcons.map(([label, icon]) => <IconButton key={label} label={label}>{icon}</IconButton>)}
      </div>
      <hr className="mx-1 mt-1 mb-1.5 border-t-2 border-[#a0a0a0]" />
      <div className="flex flex-col">
        {toolIcons.map(([label, icon]) => <IconButton key={label} label={label}>{icon}</IconButton>)}
      </div>
      <hr className="mx-1 mt-1 mb-1.5 border-t-2 border-[#a0a0a0]" />
      <div className="flex flex-col">
        {cycleIcons.map(([label, icon]) => <IconButton key={label} label={label}>{icon}</IconButton>)}
        {cycles.map((c) => (
          <button
            key={c}
            type="button"
            className={
              "text-center odd:h-[34px] even:h-[35px] " +
              (c === "日" ? "border-t-2 border-l-2 border-[#909090] bg-[#fafafa]" : "")
            }
          >
            {c}
          </button>
        ))}
      </div>
    </nav>
  );
}

const infoTabs = ["关联报价", "盘面分析", "境外资金", "综合资讯", "行业资讯"];
const detailTabs = ["笔", "价", "细", "势", "联", "值", "主", "筹"];

function InfoBar() {
  return (
    <div className="flex h-[28px] shrink-0 border-y-2 border-[#b00000] text-[18px] leading-[24px] text-[#c8c800]">
      <button type="button" className="flex w-[61px] items-center gap-1 border-r-2 border-[#900000] pl-[5px] text-[#c0c0c0]">
        <span>扩展</span>
        <svg viewBox="0 0 10 14" className="h-3.5 w-2.5" aria-hidden="true">
          <path d="M1 12 L5 2 L9 12" fill="none" stroke="#c0c0c0" strokeWidth="1.5" />
        </svg>
      </button>
      {infoTabs.map((t, i) => (
        <button key={t} type="button" className={`w-[84px] border-r-2 border-[#900000] text-center ${i === 0 ? "text-[#c0c0c0]" : ""}`}>
          {t}
        </button>
      ))}
      <div className="ml-auto flex">
        <button type="button" className="w-[73px] border-l-2 border-[#900000] text-center whitespace-nowrap">图文F10</button>
        <button type="button" className="flex w-[77px] items-center gap-1 border-l-2 border-[#900000] whitespace-nowrap">
          <span>侧边栏</span>
          <svg viewBox="0 0 14 16" className="h-4 w-3.5" aria-hidden="true">
            <path d="M7 1 L2 8 L7 15 M12 1 L7 8 L12 15" fill="none" stroke="#c8c800" strokeWidth="1.5" />
          </svg>
        </button>
      </div>
      <div className="grid w-[350px] grid-cols-8 pr-1">
        {detailTabs.map((t, i) => (
          <button
            key={t}
            type="button"
            className={
              "border-l-2 border-[#900000] pr-0.5 text-center " +
              (i === 0 ? "text-[#54fcfc]" : i < 4 ? "text-[#c0c0c0]" : "text-[#808080]")
            }
          >
            {t}
          </button>
        ))}
      </div>
    </div>
  );
}

const indexes = [
  ["上证", "3197.90", "-42.46", "-1.31%", "4062亿"],
  ["深证", "11058.6", "-246.73", "-2.18%", "6157亿"],
  ["中小", "7275.93", "-179.07", "-2.40%", "670.1亿"],
];

function StatusBar() {
  return (
    <footer className="flex h-[33px] shrink-0 items-center border-b-2 border-[#303840] bg-linear-to-b from-[#303030] to-[#080808] text-[21px] leading-[28px] font-medium whitespace-nowrap text-[#00c040]">
      {indexes.map(([name, last, diff, pct, turnover]) => (
        <div key={name} className="flex items-center">
          <span className="w-[53px] text-[24px] font-light text-[#d0d0d0]">{name}</span>
          <span className="w-[91px]">{last}</span>
          <span className="w-[85px]">{diff}</span>
          <span className="w-[87px]">{pct}</span>
          <span className="w-[96px] text-[#e0e0e0]"><Amount value={turnover} /></span>
        </div>
      ))}
      <svg viewBox="0 0 166 28" className="h-7 w-[166px] shrink-0" role="img" aria-label="连接状态">
        <path d="M2 0 V28 M164 0 V28" stroke="#505050" />
        {[7, 85].map((x) => (
          <g key={x}>
            <rect x={x + 24} y="5" width="12" height="8" fill="#ff0000" />
            <rect x={x + 37} y="5" width="18" height="8" fill="#008000" />
            <path d={`M${x} 4 h74 v10 h-74 z M${x + 19} 4 v10 M${x + 56} 4 v10`} fill="none" stroke="#ffffff" strokeWidth="2" />
            <path d={`M${x + 5} 18 h70 M${x + 5} 22 h70 M${x + 5} 26 h70`} stroke="#008000" strokeWidth="3" strokeDasharray="10 2" />
          </g>
        ))}
      </svg>
      <span className="ml-1.5 text-[18px] font-normal text-[#d0d0d0]">广州云主站Z25</span>
    </footer>
  );
}

export default function App() {
  return (
    <div className="flex min-h-screen flex-col bg-black font-['Roboto','Noto_Sans_CJK_SC',sans-serif]">
      <TopBar />
      <div className="flex grow">
        <div className="flex min-w-0 grow flex-col">
          <div className="flex grow">
            <SideTabs />
            <Charts />
            <QuotePanel />
          </div>
          <InfoBar />
          <StatusBar />
        </div>
        <ToolRail />
      </div>
    </div>
  );
}
